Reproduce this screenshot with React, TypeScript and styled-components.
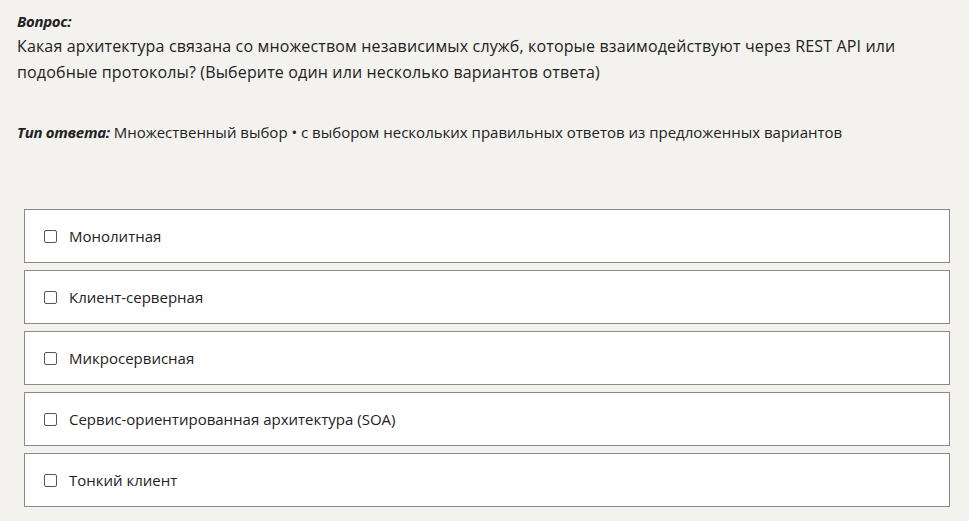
import React from "react";
import styled, { createGlobalStyle } from "styled-components";

const Global = createGlobalStyle`
  html, body { margin: 0; padding: 0; background: #f3f2ef; }
  body { font-family: "Segoe UI", "Open Sans", "Noto Sans", sans-serif; color: #222; }
`;

const Page = styled.div`
  padding: 9px 17px 0 17px;
  width: 969px;
  box-sizing: border-box;
`;

const Label = styled.div`
  font-weight: 700;
  font-style: italic;
  font-size: 15px;
  line-height: 24px;
  letter-spacing: -0.3px;
`;

const QuestionText = styled.div`
  font-size: 16px;
  line-height: 26px;
  letter-spacing: 0.15px;
`;

const TypeLine = styled.div`
  margin-top: 35px;
  font-size: 15px;
  line-height: 24px;
  b {
    font-weight: 700;
    font-style: italic;
    letter-spacing: -0.3px;
  }
`;

const Options = styled.div`
  margin: 65px 2px 0 7px;
  display: flex;
  flex-direction: column;
  gap: 7px;
`;

const Option = styled.label`
  display: flex;
  align-items: center;
  height: 54px;
  box-sizing: border-box;
  background: #fff;
  border: 1px solid #8a8a8a;
  padding-left: 19px;
  font-size: 15px;
  color: #222;
`;

const Box = styled.span`
  width: 11px;
  height: 11px;
  border: 1px solid #555;
  border-radius: 2px;
  margin-right: 12px;
  flex: none;
  background: #fff;
`;

const options = [
  "Монолитная",
  "Клиент-серверная",
  "Микросервисная",
  "Сервис-ориентированная архитектура (SOA)",
  "Тонкий клиент",
];

export default function App() {
  return (
    <>
      <Global />
      <Page>
        <Label>Вопрос:</Label>
        <QuestionText>
          Какая архитектура связана со множеством независимых служб, которые взаимодействуют через REST API или
          подобные протоколы? (Выберите один или несколько вариантов ответа)
        </QuestionText>
        <TypeLine>
          <b>Тип ответа:</b> Множественный выбор • с выбором нескольких правильных ответов из предложенных вариантов
        </TypeLine>
        <Options>
          {options.map((o) => (
            <Option key={o}>
              <Box />
              {o}
            </Option>
          ))}
        </Options>
      </Page>
    </>
  );
}
